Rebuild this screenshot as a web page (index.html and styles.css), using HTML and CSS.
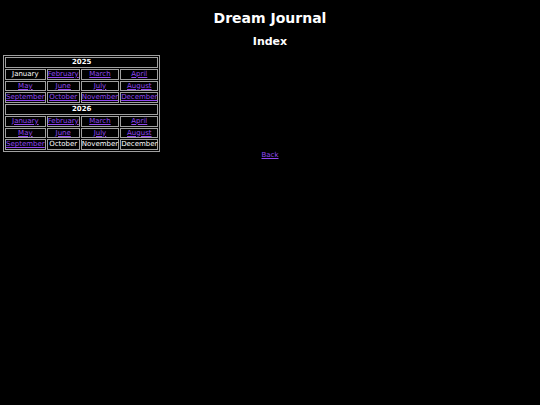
FILE: index.html
```html
<!DOCTYPE html>
<html>
<head>
<meta charset="utf-8">
<title>Dream Journal</title>
<link rel="stylesheet" href="styles.css">
</head>
<body>
<h1 class="title">Dream Journal</h1>
<h2 class="subtitle">Index</h2>
<table class="cal">
<tr><th colspan="4">2025</th></tr>
<tr><td>January</td><td><a href="#">February</a></td><td><a href="#">March</a></td><td><a href="#">April</a></td></tr>
<tr><td><a href="#">May</a></td><td><a href="#">June</a></td><td><a href="#">July</a></td><td><a href="#">August</a></td></tr>
<tr><td><a href="#">September</a></td><td><a href="#">October</a></td><td><a href="#">November</a></td><td><a href="#">December</a></td></tr>
<tr><th colspan="4">2026</th></tr>
<tr><td><a href="#">January</a></td><td><a href="#">February</a></td><td><a href="#">March</a></td><td><a href="#">April</a></td></tr>
<tr><td><a href="#">May</a></td><td><a href="#">June</a></td><td><a href="#">July</a></td><td><a href="#">August</a></td></tr>
<tr><td><a href="#">September</a></td><td>October</td><td>November</td><td>December</td></tr>
</table>
<p class="back"><a href="#">Back</a></p>
</body>
</html>
```
FILE: styles.css
```css
html, body {
  background: #000;
}
body {
  margin: 0;
  padding: 3px;
  color: #fff;
  font-family: "DejaVu Sans", sans-serif;
}
.title {
  margin: 6px 0 0;
  font-size: 14px;
  line-height: 18px;
  text-align: center;
  font-weight: bold;
}
.subtitle {
  margin: 8px 0 0;
  font-size: 11px;
  line-height: 14px;
  text-align: center;
  font-weight: bold;
}
.cal {
  margin-top: 6px;
  border: 1px solid #a0a0a0;
  border-spacing: 1px;
  font-size: 7px;
}
.cal th, .cal td {
  border: 1px solid #a0a0a0;
  padding: 0;
  line-height: 8.75px;
  text-align: center;
  white-space: nowrap;
}
.cal th {
  font-weight: bold;
}
a {
  color: #9248f0;
}
.back {
  margin: 0;
  padding-top: 0;
  text-align: center;
  font-size: 7px;
  line-height: 7px;
}
```
